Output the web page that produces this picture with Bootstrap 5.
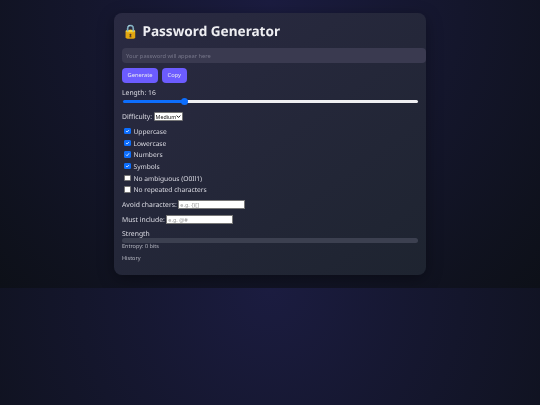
<!doctype html>
<html lang="en">
<head>
<meta charset="utf-8">
<title>Password Generator</title>
<link href="https://cdn.jsdelivr.net/npm/bootstrap@5.3.0/dist/css/bootstrap.min.css" rel="stylesheet">
<style>
html{background:radial-gradient(ellipse at top,#1b1c40 0%,#0d1018 100%) 0 0/100% 288px repeat}
body{background:transparent;font-family:"Noto Sans",sans-serif;font-size:6.8px;line-height:11.75px;color:#dcdce4;padding:13px 0;text-rendering:geometricPrecision}
.gen-panel{width:312px;height:262px;margin:0 auto;padding:8px;border-radius:8px;background:linear-gradient(145deg,#2a2a42,#1e2430);box-shadow:0 4px 16px rgba(0,0,0,.35);filter:blur(.3px)}
.gen-title{font-size:13.6px;line-height:19px;font-weight:700;margin:0 0 8px;color:#eeeef2}
.gen-output{display:block;width:304px;height:15px;border:0;border-radius:4px;padding:0 4px;background:#3a3a50;color:#e6e6ec;font-size:5.75px;outline:0;font-family:inherit}
.gen-output::placeholder{color:#77778a}
.gen-btn{background:#6c5cff;color:#e8e8f0;border:0;border-radius:4px;font-size:5.75px;line-height:8px;padding:3px 5.5px;height:15px;font-family:inherit}
.gen-btn:hover{background:#6c5cff;color:#e8e8f0}
.gen-row{display:flex;gap:4px;margin:4.5px 0 3px}
.gen-length{padding-top:1.5px;height:11.75px}
.gen-range{display:block;-webkit-appearance:none;appearance:none;background:transparent;width:295px;height:8px;margin:0 0 0 1px}
.gen-range::-webkit-slider-runnable-track{height:3px;border-radius:2px;background:linear-gradient(90deg,#0d6efd 20.5%,#efeff2 20.5%)}
.gen-range::-webkit-slider-thumb{-webkit-appearance:none;width:7px;height:7px;margin-top:-2px;border-radius:50%;background:#0d6efd}
.gen-diff{display:flex;align-items:center;gap:1.5px;margin:4.5px 0 3px}
.gen-diff span,.gen-field span{padding-top:1px}
.gen-select{-webkit-appearance:none;appearance:none;width:29px;height:9px;padding:0 0 0 1px;border:.5px solid #777;border-radius:1px;font-size:5.3px;line-height:8px;font-family:inherit;color:#111;background:#fff url("data:image/svg+xml,%3Csvg xmlns='http://www.w3.org/2000/svg' viewBox='0 0 8 8'%3E%3Cpath d='M1 2.5l3 3 3-3' fill='none' stroke='%23111' stroke-width='1.5'/%3E%3C/svg%3E") no-repeat right 1px center/5px 5px}
.gen-check{display:flex;align-items:center;gap:3px;height:11.7px;padding:1px 0 0 2px;margin:0;font-size:6.65px}
.gen-check input{-webkit-appearance:none;appearance:none;flex:none;margin:-1.5px 0 0;width:6.5px;height:6.5px;border:.5px solid #777;border-radius:1px;background:#fff}
.gen-check input:checked{border-color:#0d6efd;background:#0d6efd url("data:image/svg+xml,%3Csvg xmlns='http://www.w3.org/2000/svg' viewBox='0 0 8 8'%3E%3Cpath d='M1.5 4.2l1.8 1.8 3.2-4' fill='none' stroke='%23fff' stroke-width='1.3'/%3E%3C/svg%3E") center/100% 100%}
.gen-field{display:flex;align-items:center;gap:1.5px;margin-top:3px;height:12px}
.gen-field:first-of-type{margin-top:3.5px}
.gen-text{width:67px;height:9px;font-size:5.5px;padding:0 1px;font-family:inherit;line-height:8px;border:.5px solid #777;border-radius:0;background:#fff;color:#111}
.gen-text::placeholder{color:#999}
.gen-track{height:5px;border-radius:2.5px;background:#3c4050}
.gen-strength{margin-top:4px;line-height:8px}
.gen-small{font-size:5.5px;line-height:6px;color:#b4b6c0;margin-top:.5px}
.gen-history{line-height:8px;margin-top:5px}
</style>
</head>
<body>
<main class="gen-panel">
  <h1 class="gen-title">🔒 Password Generator</h1>
  <input class="gen-output" type="text" placeholder="Your password will appear here" readonly>
  <div class="gen-row">
    <button class="btn gen-btn" type="button">Generate</button>
    <button class="btn gen-btn" type="button">Copy</button>
  </div>
  <div class="gen-length">Length: 16</div>
  <input class="gen-range" type="range" min="4" max="64" value="16">
  <div class="gen-diff"><span>Difficulty:</span> <select class="gen-select"><option>Medium</option></select></div>
  <label class="gen-check"><input type="checkbox" checked>Uppercase</label>
  <label class="gen-check"><input type="checkbox" checked>Lowercase</label>
  <label class="gen-check"><input type="checkbox" checked>Numbers</label>
  <label class="gen-check"><input type="checkbox" checked>Symbols</label>
  <label class="gen-check"><input type="checkbox">No ambiguous (O0Il1)</label>
  <label class="gen-check"><input type="checkbox">No repeated characters</label>
  <div class="gen-field"><span>Avoid characters:</span> <input class="gen-text" type="text" placeholder="e.g. {}[]"></div>
  <div class="gen-field"><span>Must include:</span> <input class="gen-text" type="text" placeholder="e.g. @#"></div>
  <div class="gen-strength">Strength</div>
  <div class="gen-track"></div>
  <div class="gen-small">Entropy: 0 bits</div>
  <div class="gen-small gen-history">History</div>
</main>
<script src="https://cdn.jsdelivr.net/npm/bootstrap@5.3.0/dist/js/bootstrap.bundle.min.js"></script>
</body>
</html>
